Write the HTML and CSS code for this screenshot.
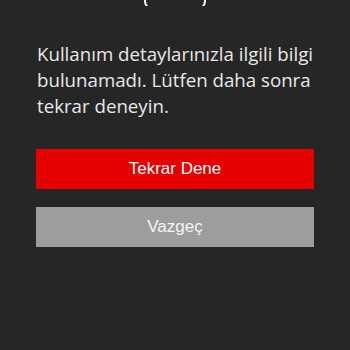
FILE: index.html
```html
<!DOCTYPE html>
<html>
<head>
<meta charset="utf-8">
<link rel="stylesheet" href="styles.css">
</head>
<body>
<div class="screen">
  <div class="top"><div class="handle"></div></div>
  <p class="msg">Kullanım detaylarınızla ilgili bilgi bulunamadı. Lütfen daha sonra tekrar deneyin.</p>
  <div class="actions">
    <button class="btn btn-primary">Tekrar Dene</button>
    <button class="btn btn-secondary">Vazgeç</button>
  </div>
</div>
</body>
</html>
```
FILE: styles.css
```css
html, body {
  margin: 0;
  padding: 0;
  background: #262626;
}
.screen {
  width: 350px;
  height: 350px;
  background: #262626;
  overflow: hidden;
}
.top {
  display: flex;
  justify-content: center;
  height: 6px;
  overflow: hidden;
}
.handle {
  width: 58px;
  height: 30px;
  margin-top: -24px;
  border: 2px solid #f2f2f2;
  border-radius: 9px;
  flex: none;
}
.msg {
  margin: 35px 28px 0 37px;
  font-family: "Open Sans", sans-serif;
  font-size: 18.7px;
  line-height: 26px;
  color: #e8e8e8;
}
.actions {
  display: flex;
  flex-direction: column;
  gap: 18px;
  margin: 30px 36px 0 36px;
}
.btn {
  height: 40px;
  border: 0;
  padding: 0;
  font-family: "Liberation Sans", Arial, sans-serif;
  font-size: 17px;
}
.btn-primary {
  background: #e60000;
  color: #ffffff;
}
.btn-secondary {
  background: #9d9d9d;
  color: #f4f4f4;
}
```
